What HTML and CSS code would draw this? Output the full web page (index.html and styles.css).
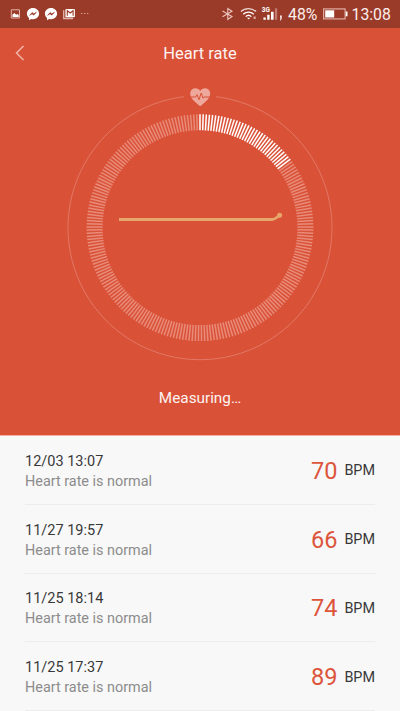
FILE: index.html
```
<!DOCTYPE html>
<html lang="en">
<head>
<meta charset="utf-8">
<title>Heart rate</title>
<link rel="stylesheet" href="styles.css">
</head>
<body>
<div class="status">
  <svg class="status-left" width="90" height="28" viewBox="0 0 90 28">
    <path d="M11.3 9.8h8.2v8.2h-8.2z" fill="none" stroke="#e3b5aa" stroke-width="1"/>
    <path d="M12.5 17v-2.500l2-1.400 1.700 1.700 1.300-.9 1.200 1V17z" fill="#fff"/>
    <g id="chat">
      <path d="M33 7.900c-3.500 0-6.100 2.500-6.100 5.700 0 1.800.8 3.300 2.100 4.300v2.400l2.100-1.200c.6.2 1.200.2 1.900.2 3.500 0 6.100-2.500 6.100-5.700S36.500 7.900 33 7.900z" fill="#fff"/>
      <path d="M29.700 15.200l2.700-2.700 1.400 1.500 2.500-1.700-2.700 2.900-1.500-1.500z" fill="#9a3a29" stroke="#9a3a29" stroke-width=".7"/>
    </g>
    <use href="#chat" x="18"/>
    <path d="M63.700 10.200v8.300h9.300" fill="none" stroke="#e3b5aa" stroke-width="1.300"/>
    <rect x="65.400" y="9" width="9.500" height="8.300" rx=".8" fill="#fff"/>
    <path d="M67.300 15.700v-5l2.900 2.300 2.900-2.300v5" fill="none" stroke="#9a3a29" stroke-width="1.100"/>
    <path d="M81 13.500h1.300M84 13.500h1.300M87 13.500h1.300" stroke="#dba599" stroke-width="1.200"/>
  </svg>
  <div class="status-right">
    <svg width="64" height="28" viewBox="0 0 64 28">
      <path d="M2.500 11l9.500 5.500-4.200 2.900V8.500l4.200 2.700-9.500 5.600" fill="none" stroke="#ebc6be" stroke-width="1.100"/>
      <g fill="none" stroke="#fff" stroke-width="1.300">
        <path d="M20.900 11.600c4.300-4 10.900-4 15.200 0" opacity=".8"/>
        <path d="M23.200 14.200c3-2.900 7.600-2.900 10.600 0"/>
        <path d="M25.700 16.600c1.700-1.600 4-1.600 5.700 0"/>
      </g>
      <path d="M27 17.800h3.200l-1.600 1.700z" fill="#fff"/>
      <path d="M33.500 16.500h2.300v2.500h-2.300z" fill="#d9a397"/>
      <text class="net" x="41.800" y="12.200">3G</text>
      <path d="M43.400 17.500h2.400v2.300h-2.400zM47.200 14.700h2.400v5.100h-2.400zM51 11.700h2.600v8.100h-2.600z" fill="#fff"/>
      <path d="M54.900 8.300h2.300v11.500h-2.300z" fill="#c37d70"/>
      <path d="M60 15.600h1.700v3l-1 1.800H60l.4-1.700z" fill="#fff"/>
    </svg>
    <span class="pct">48%</span>
    <svg class="battery" width="26" height="12" viewBox="0 0 26 12">
      <rect x=".6" y=".9" width="21.500" height="10" fill="none" stroke="#dfaca1" stroke-width="1.200"/>
      <path d="M2.200 2.300h9v7.200h-9z" fill="#fff"/>
      <path d="M22.700 3.500h1.800v4.800h-1.800z" fill="#fff"/>
    </svg>
    <span class="clock">13:08</span>
  </div>
</div>
<main class="hero">
  <header class="bar">
    <svg class="back" width="12" height="18" viewBox="0 0 12 18"><path d="M9.500 2L2.500 9l7 7" fill="none" stroke="#f0b5a9" stroke-width="1.500"/></svg>
    <h1>Heart rate</h1>
  </header>
  <svg class="dial" width="272" height="282" viewBox="64 82 272 282">
    <path d="M216 96.700A132 132 0 1 1 184 96.700" fill="none" stroke="#e37865" stroke-width="1"/>
    <g id="ticks"></g>
    <path d="M200.200 106.300C196 102.700 190.200 98.800 190.200 93.500c0-3.100 2.300-5.300 5.200-5.300 2 0 3.800 1 4.800 2.700 1-1.700 2.800-2.700 4.800-2.700 2.900 0 5.200 2.200 5.200 5.300 0 5.300-5.800 9.200-10 12.800z" fill="#eea79b"/>
    <path d="M190.200 97h5.500l1.300-2.300 2 5 2.200-6.700 1.800 5.200 1-1.200h6.200" fill="none" stroke="#d95137" stroke-width="1"/>
    <path d="M119 219.500h153c3 0 4-1.500 7.300-4" fill="none" stroke="#e7a66b" stroke-width="2.800"/>
    <circle cx="279.600" cy="215.200" r="2.500" fill="#e7a66b"/>
  </svg>
  <p class="state">Measuring…</p>
</main>
<section class="list">
  <div class="row"><div><div class="date">12/03 13:07</div><div class="note">Heart rate is normal</div></div><div class="rate"><b>70</b><span>BPM</span></div></div>
  <div class="row"><div><div class="date">11/27 19:57</div><div class="note">Heart rate is normal</div></div><div class="rate"><b>66</b><span>BPM</span></div></div>
  <div class="row"><div><div class="date">11/25 18:14</div><div class="note">Heart rate is normal</div></div><div class="rate"><b>74</b><span>BPM</span></div></div>
  <div class="row"><div><div class="date">11/25 17:37</div><div class="note">Heart rate is normal</div></div><div class="rate"><b>89</b><span>BPM</span></div></div>
</section>
<script src="dial.js"></script>
</body>
</html>
```
FILE: styles.css
```
* { box-sizing: border-box; }
body {
  margin: 0;
  width: 400px;
  height: 711px;
  overflow: hidden;
  display: flex;
  flex-direction: column;
  background: #f8f8f8;
  font-family: Roboto, "Liberation Sans", sans-serif;
}
.status {
  height: 28px;
  flex: none;
  display: flex;
  justify-content: space-between;
  background: #9a3a29;
  color: #fbeeeb;
}
.status svg { display: block; }
.status-right {
  display: flex;
  align-items: center;
  width: 180px;
  font-size: 16px;
  line-height: 28px;
  white-space: nowrap;
}
.net { font-size: 6.5px; font-weight: 700; fill: #fff; }
.pct { width: 35px; margin-left: 4px; padding-top: 2px; font-size: 15.8px; }
.battery { flex: none; }
.clock { margin-left: 2.5px; padding-top: 2px; font-size: 15.8px; }
.hero {
  height: 408px;
  flex: none;
  display: flex;
  flex-direction: column;
  align-items: center;
  background: #d95137;
  border-bottom: 1px solid #f0b0a3;
  color: #fdf3f1;
}
.bar {
  width: 100%;
  height: 54px;
  padding: 0 14px;
  display: grid;
  grid-template-columns: 12px 1fr 12px;
  align-items: center;
}
.bar h1 {
  margin: 0;
  font-size: 16.5px;
  font-weight: 400;
  line-height: 52px;
  height: 54px;
  text-align: center;
}
.back { margin-top: -4px; }
.dial { display: block; flex: none; }
.state { margin: 24px 0 0; font-size: 15.3px; line-height: 20px; }
.list { padding: 0 25px; }
.row {
  height: 68.8px;
  display: flex;
  justify-content: space-between;
  align-items: center;
  border-bottom: 1px solid #ededed;
}
.date { font-size: 14.5px; line-height: 20px; color: #383838; margin-top: 4px; }
.note { font-size: 14.4px; line-height: 20px; color: #8c8c8c; }
.rate { display: flex; align-items: center; }
.rate b { font-size: 23.5px; line-height: 28px; font-weight: 400; color: #dc553b; margin: 2px 7px 0 0; }
.rate span { font-size: 14.4px; line-height: 20px; color: #383838; padding-top: 3px; }
```
FILE: dial.js
```
const ring = document.getElementById('ticks');
const count = 225;
const lit = 33;
for (let i = 0; i < count; i++) {
  const tick = document.createElementNS('http://www.w3.org/2000/svg', 'path');
  tick.setAttribute('d', 'M200 114.3v16');
  tick.setAttribute('transform', `rotate(${i * 360 / count} 200 227.7)`);
  tick.setAttribute('stroke', i <= lit ? '#fff' : '#e98b79');
  tick.setAttribute('stroke-width', 1.5);
  ring.appendChild(tick);
}
```
